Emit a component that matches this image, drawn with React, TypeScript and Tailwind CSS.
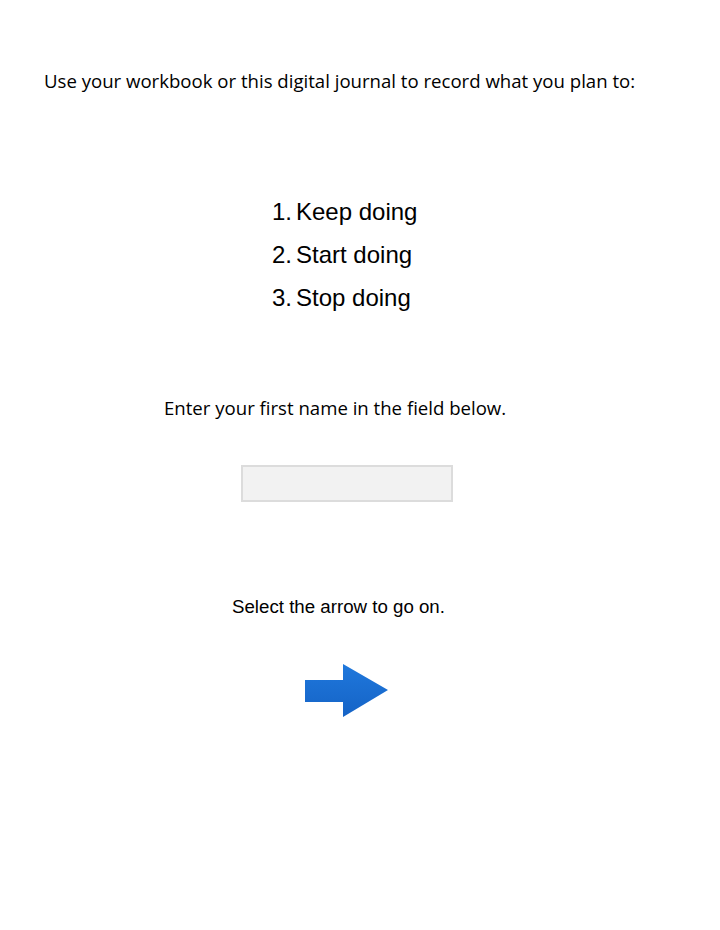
import React from 'react';

const steps = ['Keep doing', 'Start doing', 'Stop doing'];

const NextArrow: React.FC = () => (
  <svg width="84" height="54" viewBox="0 0 84 54" aria-label="Next">
    <defs>
      <linearGradient id="arrowFill" x1="0" y1="0" x2="0" y2="1">
        <stop offset="0" stopColor="#1f78dc" />
        <stop offset="1" stopColor="#1563c6" />
      </linearGradient>
    </defs>
    <path d="M0 16 H38 V0 L83 26 L38 53 V38 H0 Z" fill="url(#arrowFill)" />
  </svg>
);

export default function App() {
  return (
    <div className="w-[720px] h-[930px] bg-white text-black">
      <p className="pt-[68px] pl-[44px] text-[18.6px] leading-[26px] font-['Open_Sans',sans-serif]">
        Use your workbook or this digital journal to record what you plan to:
      </p>

      <ol className="mt-[96px] ml-[272px] font-['Liberation_Sans',Arial,sans-serif] text-[24px] leading-[43px]">
        {steps.map((s, i) => (
          <li key={s} className="flex">
            <span className="w-[24px]">{i + 1}.</span>
            <span>{s}</span>
          </li>
        ))}
      </ol>

      <p className="mt-[76px] ml-[164px] text-[18.6px] leading-[26px] font-['Open_Sans',sans-serif]">
        Enter your first name in the field below.
      </p>

      <input
        type="text"
        className="block mt-[44px] ml-[241px] w-[212px] h-[37px] bg-[#f2f2f2] border-2 border-[#dcdcdc] outline-none px-2 text-[16px]"
      />

      <p className="mt-[93px] ml-[232px] text-[18.7px] leading-[24px] font-['Liberation_Sans',Arial,sans-serif]">
        Select the arrow to go on.
      </p>

      <button className="block mt-[45px] ml-[305px] cursor-pointer">
        <NextArrow />
      </button>
    </div>
  );
}
